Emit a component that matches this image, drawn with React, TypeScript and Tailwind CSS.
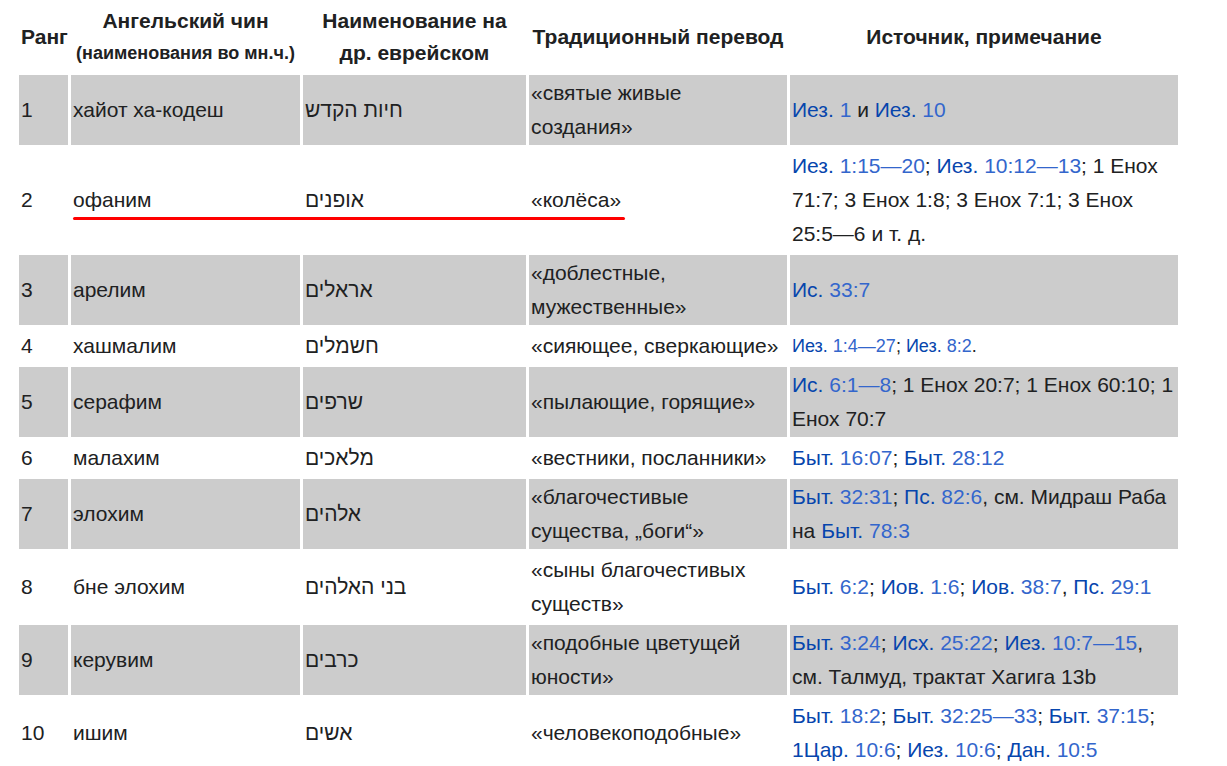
import React from "react";

type Seg = { t: string; k?: "b" | "n" };

const B = (t: string): Seg => ({ t, k: "b" });
const N = (t: string): Seg => ({ t, k: "n" });
const T = (t: string): Seg => ({ t });

type Row = {
  rank: string;
  name: string;
  heb: string;
  tr: string;
  src: Seg[];
  small?: boolean;
};

const rows: Row[] = [
  { rank: "1", name: "хайот ха-кодеш", heb: "חיות הקדש", tr: "«святые живые создания»", src: [B("Иез."), T(" "), N("1"), T(" и "), B("Иез."), T(" "), N("10")] },
  {
    rank: "2",
    name: "офаним",
    heb: "אופנים",
    tr: "«колёса»",
    src: [B("Иез."), T(" "), N("1:15—20"), T("; "), B("Иез."), T(" "), N("10:12—13"), T("; 1 Енох 71:7; 3 Енох 1:8; 3 Енох 7:1; 3 Енох 25:5—6 и т. д.")],
  },
  { rank: "3", name: "арелим", heb: "אראלים", tr: "«доблестные, мужественные»", src: [B("Ис."), T(" "), N("33:7")] },
  {
    rank: "4",
    name: "хашмалим",
    heb: "חשמלים",
    tr: "«сияющее, сверкающие»",
    src: [B("Иез."), T(" "), N("1:4—27"), T("; "), B("Иез."), T(" "), N("8:2"), T(".")],
    small: true,
  },
  { rank: "5", name: "серафим", heb: "שרפים", tr: "«пылающие, горящие»", src: [B("Ис."), T(" "), N("6:1—8"), T("; 1 Енох 20:7; 1 Енох 60:10; 1 Енох 70:7")] },
  { rank: "6", name: "малахим", heb: "מלאכים", tr: "«вестники, посланники»", src: [B("Быт."), T(" "), N("16:07"), T("; "), B("Быт."), T(" "), N("28:12")] },
  {
    rank: "7",
    name: "элохим",
    heb: "אלהים",
    tr: "«благочестивые существа, „боги“»",
    src: [B("Быт."), T(" "), N("32:31"), T("; "), B("Пс."), T(" "), N("82:6"), T(", см. Мидраш Раба на "), B("Быт."), T(" "), N("78:3")],
  },
  {
    rank: "8",
    name: "бне элохим",
    heb: "בני האלהים",
    tr: "«сыны благочестивых существ»",
    src: [B("Быт."), T(" "), N("6:2"), T("; "), B("Иов."), T(" "), N("1:6"), T("; "), B("Иов."), T(" "), N("38:7"), T(", "), B("Пс."), T(" "), N("29:1")],
  },
  {
    rank: "9",
    name: "керувим",
    heb: "כרבים",
    tr: "«подобные цветущей юности»",
    src: [B("Быт."), T(" "), N("3:24"), T("; "), B("Исх."), T(" "), N("25:22"), T("; "), B("Иез."), T(" "), N("10:7—15"), T(", см. Талмуд, трактат Хагига 13b")],
  },
  {
    rank: "10",
    name: "ишим",
    heb: "אשים",
    tr: "«человекоподобные»",
    src: [
      B("Быт."), T(" "), N("18:2"), T("; "), B("Быт."), T(" "), N("32:25—33"), T("; "), B("Быт."), T(" "), N("37:15"), T("; "),
      B("1Цар."), T(" "), N("10:6"), T("; "), B("Иез."), T(" "), N("10:6"), T("; "), B("Дан."), T(" "), N("10:5"),
    ],
  },
];

function Src({ segs }: { segs: Seg[] }) {
  return (
    <>
      {segs.map((s, i) =>
        s.k === "b" ? (
          <span key={i} className="text-[#0645ad]">{s.t}</span>
        ) : s.k === "n" ? (
          <span key={i} className="text-[#3366cc]">{s.t}</span>
        ) : (
          <span key={i}>{s.t}</span>
        )
      )}
    </>
  );
}

export default function App() {
  return (
    <div className="relative min-h-[766px] w-[1227px] bg-white text-[#202122]" style={{ fontFamily: '"Liberation Sans", Arial, sans-serif' }}>
      <table className="ml-[16px] w-[1165px] table-fixed border-separate border-spacing-[3px] text-[21px] leading-[34px]">
        <colgroup>
          <col className="w-[49px]" />
          <col className="w-[229px]" />
          <col className="w-[223px]" />
          <col className="w-[258px]" />
          <col className="w-[388px]" />
        </colgroup>
        <thead>
          <tr>
            <th className="w-[49px] px-[2px] pt-[2px] pb-[3px] text-left font-bold leading-[32px]">Ранг</th>
            <th className="w-[229px] px-[2px] pt-[2px] pb-[3px] text-center font-bold leading-[32px]">
              <div>Ангельский чин</div>
              <div className="text-[18px]">(наименования во мн.ч.)</div>
            </th>
            <th className="w-[223px] px-[2px] pt-[2px] pb-[3px] text-center font-bold leading-[32px]">Наименование на др. еврейском</th>
            <th className="w-[258px] px-[2px] pt-[2px] pb-[3px] text-center font-bold leading-[32px]">Традиционный перевод</th>
            <th className="w-[388px] px-[2px] pt-[2px] pb-[3px] text-center font-bold leading-[32px]">Источник, примечание</th>
          </tr>
        </thead>
        <tbody>
          {rows.map((r, i) => {
            const bg = i % 2 === 0 ? "bg-[#cccccc]" : "bg-white";
            return (
              <tr key={r.rank}>
                <td className={`${bg} px-[2px] py-px`}>{r.rank}</td>
                <td className={`${bg} px-[2px] py-px`}>{r.name}</td>
                <td className={`${bg} px-[2px] py-px`}>
                  <span dir="rtl">{r.heb}</span>
                </td>
                <td className={`${bg} px-[2px] py-px`}>{r.tr}</td>
                <td className={`${bg} px-[2px] py-px ${r.small ? "text-[18px]" : ""}`}>
                  <Src segs={r.src} />
                </td>
              </tr>
            );
          })}
        </tbody>
      </table>
      <div className="absolute left-[73px] top-[217px] h-[3px] w-[552px] rounded-full bg-[#ff0000]" />
    </div>
  );
}
